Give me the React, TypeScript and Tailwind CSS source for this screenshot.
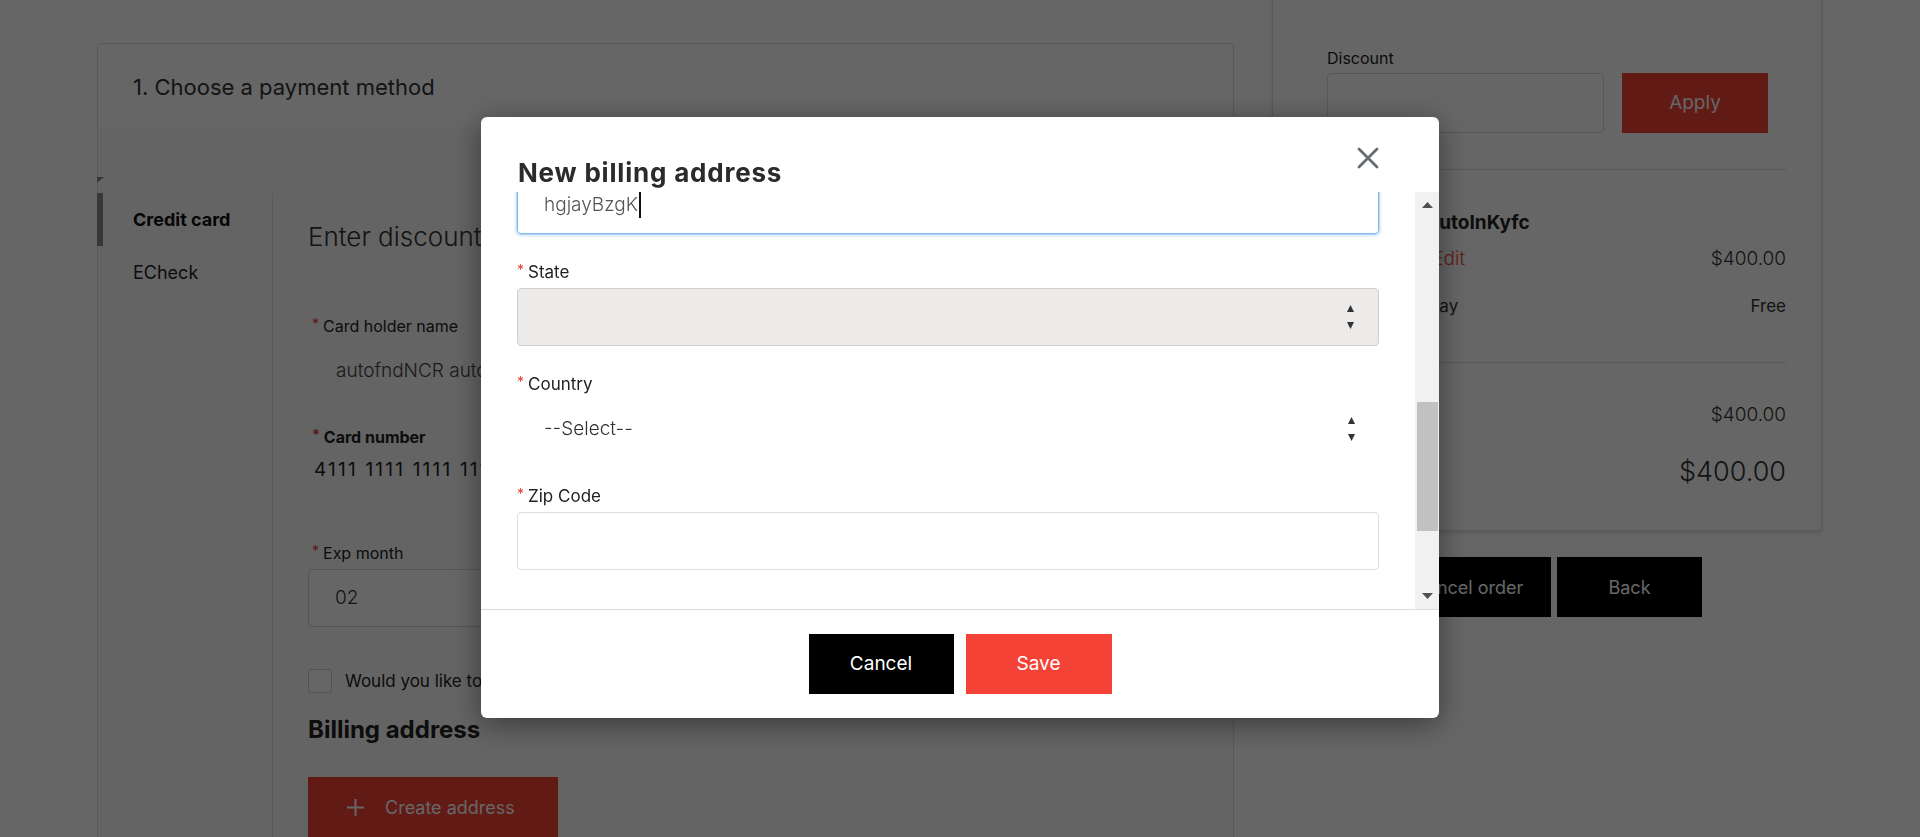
import React from "react";

const Req = () => <span className="self-start mt-[1px] mr-[4px] text-[14px] leading-[14px] text-[#e53935]">*</span>;

const Arrows = () => (
  <div className="flex flex-col items-center gap-[10px]">
    <svg width="7" height="7" viewBox="0 0 7 7"><path d="M3.5 0L7 7H0z" fill="#333" /></svg>
    <svg width="7" height="7" viewBox="0 0 7 7"><path d="M0 0h7L3.5 7z" fill="#333" /></svg>
  </div>
);

const ModalLabel = ({ text }: { text: string }) => (
  <div className="flex items-center h-[20px] text-[17px] leading-[20px] text-[#222]">
    <Req />
    <span>{text}</span>
  </div>
);

function BillingModal() {
  return (
    <div className="fixed left-[481px] top-[117px] w-[958px] bg-white rounded-[6px] shadow-[0_6px_30px_rgba(0,0,0,0.45)] overflow-hidden">
      {/* header */}
      <div className="flex justify-between items-start h-[75px] pl-[37px] pr-[60px]">
        <h2 className="mt-[40px] text-[26px] leading-[32px] font-bold text-[#2b2b2b] tracking-[0.8px]">New billing address</h2>
        <button className="mt-[30px] w-[22px] h-[22px]">
          <svg width="22" height="22" viewBox="0 0 22 22">
            <path d="M2 2L20 20M20 2L2 20" stroke="#666c72" strokeWidth="2.8" strokeLinecap="round" />
          </svg>
        </button>
      </div>

      {/* scroll body */}
      <div className="flex h-[418px] border-b border-[#dcdcdc]">
        <div className="flex-1 overflow-hidden px-[36px]">
          <div className="-mt-[16px]">
            <div className="h-[58px] rounded-[4px] border border-[#80b9ea] shadow-[0_0_0_1px_rgba(128,185,234,0.35),0_1px_4px_rgba(80,150,220,0.45)] flex items-center pl-[26px] text-[19px] font-light text-[#555]">
              hgjayBzgK<span className="ml-[1px] w-[2px] h-[26px] bg-[#111]" />
            </div>

            <div className="mt-[28px]">
              <ModalLabel text="State" />
              <div className="mt-[6px] h-[58px] rounded-[4px] border border-[#cfcfcf] bg-[#ecebe9] flex items-center justify-end pr-[24px]">
                <Arrows />
              </div>
            </div>

            <div className="mt-[28px]">
              <ModalLabel text="Country" />
              <div className="mt-[6px] h-[58px] flex items-center justify-between pl-[27px] pr-[24px] text-[19px] font-light text-[#333]">
                <span>--Select--</span>
                <Arrows />
              </div>
            </div>

            <div className="mt-[28px]">
              <ModalLabel text="Zip Code" />
              <div className="mt-[6px] h-[58px] rounded-[4px] border border-[#dedede] bg-white" />
            </div>
          </div>
        </div>

        {/* scrollbar */}
        <div className="w-[24px] bg-[#f1f1f1] flex flex-col items-center">
          <div className="h-[26px] flex items-center justify-center">
            <svg width="11" height="6" viewBox="0 0 11 6"><path d="M5.5 0L11 6H0z" fill="#505050" /></svg>
          </div>
          <div className="h-[184px]" />
          <div className="w-[21px] h-[129px] bg-[#c1c1c1] ml-[1px]" />
          <div className="flex-1" />
          <div className="h-[26px] flex items-center justify-center">
            <svg width="11" height="6" viewBox="0 0 11 6"><path d="M0 0h11L5.5 6z" fill="#505050" /></svg>
          </div>
        </div>
      </div>

      {/* footer */}
      <div className="flex justify-center gap-[12px] pt-[24px] pb-[24px]">
        <button className="w-[145px] h-[60px] bg-black text-white text-[19px]">Cancel</button>
        <button className="w-[146px] h-[60px] bg-[#f44336] text-white text-[19px]">Save</button>
      </div>
    </div>
  );
}

function FieldLabel({ text, bold }: { text: string; bold?: boolean }) {
  return (
    <div className={"flex items-center h-[20px] pl-[4px] text-[16px] leading-[20px] text-[#222] " + (bold ? "font-bold" : "")}>
      <Req />
      <span>{text}</span>
    </div>
  );
}

function PaymentCard() {
  return (
    <div className="w-[1137px] h-[900px] border border-[#dedede] rounded-[4px] bg-[#fafafa]">
      <div className="h-[83px] bg-white rounded-t-[4px] pl-[35px] pt-[28px]">
        <h1 className="text-[22px] leading-[30px] text-[#333]">1. Choose a payment method</h1>
      </div>

      <div className="pt-[50px]">
        <svg width="7" height="6" viewBox="0 0 7 6" className="block -ml-[1px]"><path d="M0 0h7L0 6z" fill="#8a8a8a" /></svg>
        <div className="flex mt-[10px]">
          {/* tabs */}
          <div className="w-[175px] h-[700px] border-r border-[#e0e0e0]">
            <div className="relative h-[53px] flex items-center pl-[35px] text-[18px] font-bold text-[#111]">
              <span className="absolute -left-[1px] top-0 w-[6px] h-[53px] bg-[#8a8a8a]" />
              Credit card
            </div>
            <div className="h-[53px] flex items-center pl-[35px] text-[18px] text-[#222]">ECheck</div>
          </div>

          {/* form */}
          <div className="flex-1 pl-[35px] pt-[27px]">
            <div className="text-[26px] leading-[34px] font-light text-[#333]">Enter discount code</div>

            <div className="mt-[62px] w-[520px]">
              <FieldLabel text="Card holder name" />
              <div className="mt-[6px] h-[58px] flex items-center pl-[28px] text-[19px] font-light text-[#444]">autofndNCR auto</div>
            </div>

            <div className="mt-[27px] w-[520px]">
              <FieldLabel text="Card number" bold />
              <div className="mt-[6px] h-[62px] pt-[5px] pl-[6px] text-[19px] leading-[24px] text-[#222] tracking-[2.2px]">4111 1111 1111 1111</div>
            </div>

            <div className="mt-[28px] w-[520px]">
              <FieldLabel text="Exp month" />
              <div className="mt-[6px] h-[58px] rounded-[4px] border border-[#d6d6d6] bg-white flex items-center pl-[26px] text-[19px] font-light text-[#333]">02</div>
            </div>

            <div className="mt-[42px] h-[24px] flex items-center gap-[13px]">
              <span className="w-[24px] h-[24px] rounded-[3px] border border-[#cfcfcf] bg-white" />
              <span className="text-[17px] leading-[24px] text-[#222]">Would you like to save this card?</span>
            </div>

            <h3 className="mt-[22px] text-[24px] leading-[30px] font-bold text-[#222]">Billing address</h3>

            <button className="mt-[32px] w-[250px] h-[60px] bg-[#f44336] text-white text-[18px] flex items-center pl-[39px] gap-[21px]">
              <svg width="17" height="17" viewBox="0 0 17 17"><path d="M8.5 0v17M0 8.5h17" stroke="white" strokeWidth="2" /></svg>
              Create address
            </button>
          </div>
        </div>
      </div>
    </div>
  );
}

function SummaryColumn() {
  return (
    <div className="w-[550px] -mt-[63px]">
      <div className="border border-[#dedede] bg-white shadow-[0_2px_4px_rgba(0,0,0,0.12)] pt-[67px] pb-[41px] pl-[54px] pr-[35px]">
        <div className="text-[16px] leading-[20px] text-[#222]">Discount</div>
        <div className="mt-[5px] flex gap-[18px]">
          <div className="w-[277px] h-[60px] rounded-[4px] border border-[#d9d9d9]" />
          <button className="w-[146px] h-[60px] bg-[#f44336] text-white text-[19px]">Apply</button>
        </div>

        <div className="mt-[36px] border-t border-[#dcdcdc]" />

        <div className="mt-[41px] text-[19px] leading-[24px] font-bold text-[#222]">
          Product<span className="ml-[28px]">autoInKyfc</span>
        </div>
        <div className="mt-[12px] flex justify-between text-[19px] leading-[24px] font-light text-[#333]">
          <span>
            <span className="text-[#555]">Qty: 1</span>
            <span className="ml-[56px] text-[#f44336]">Edit</span>
          </span>
          <span>$400.00</span>
        </div>
        <div className="mt-[23px] flex justify-between text-[17px] leading-[24px] text-[#333]">
          <span>
            Shipping: 1<span className="ml-[13px]">Day</span>
          </span>
          <span>Free</span>
        </div>

        <div className="mt-[44px] border-t border-[#dcdcdc]" />

        <div className="mt-[40px] flex justify-between text-[19px] leading-[24px] font-light text-[#333]">
          <span>Subtotal</span>
          <span>$400.00</span>
        </div>
        <div className="mt-[28px] flex justify-between items-center text-[27px] leading-[34px] font-light text-[#333]">
          <span>Total</span>
          <span>$400.00</span>
        </div>
      </div>

      <div className="mt-[26px] flex gap-[6px] pl-[114px]">
        <button className="w-[165px] h-[60px] bg-black text-white text-[18px]">Cancel order</button>
        <button className="w-[145px] h-[60px] bg-black text-white text-[18px]">Back</button>
      </div>
    </div>
  );
}

export default function App() {
  return (
    <div className="relative h-[837px] overflow-hidden bg-white font-['Inter','Liberation_Sans',sans-serif]">
      <div className="flex gap-[38px] pl-[97px] pt-[43px]">
        <PaymentCard />
        <SummaryColumn />
      </div>
      <div className="fixed inset-0 bg-black/60" />
      <BillingModal />
    </div>
  );
}
